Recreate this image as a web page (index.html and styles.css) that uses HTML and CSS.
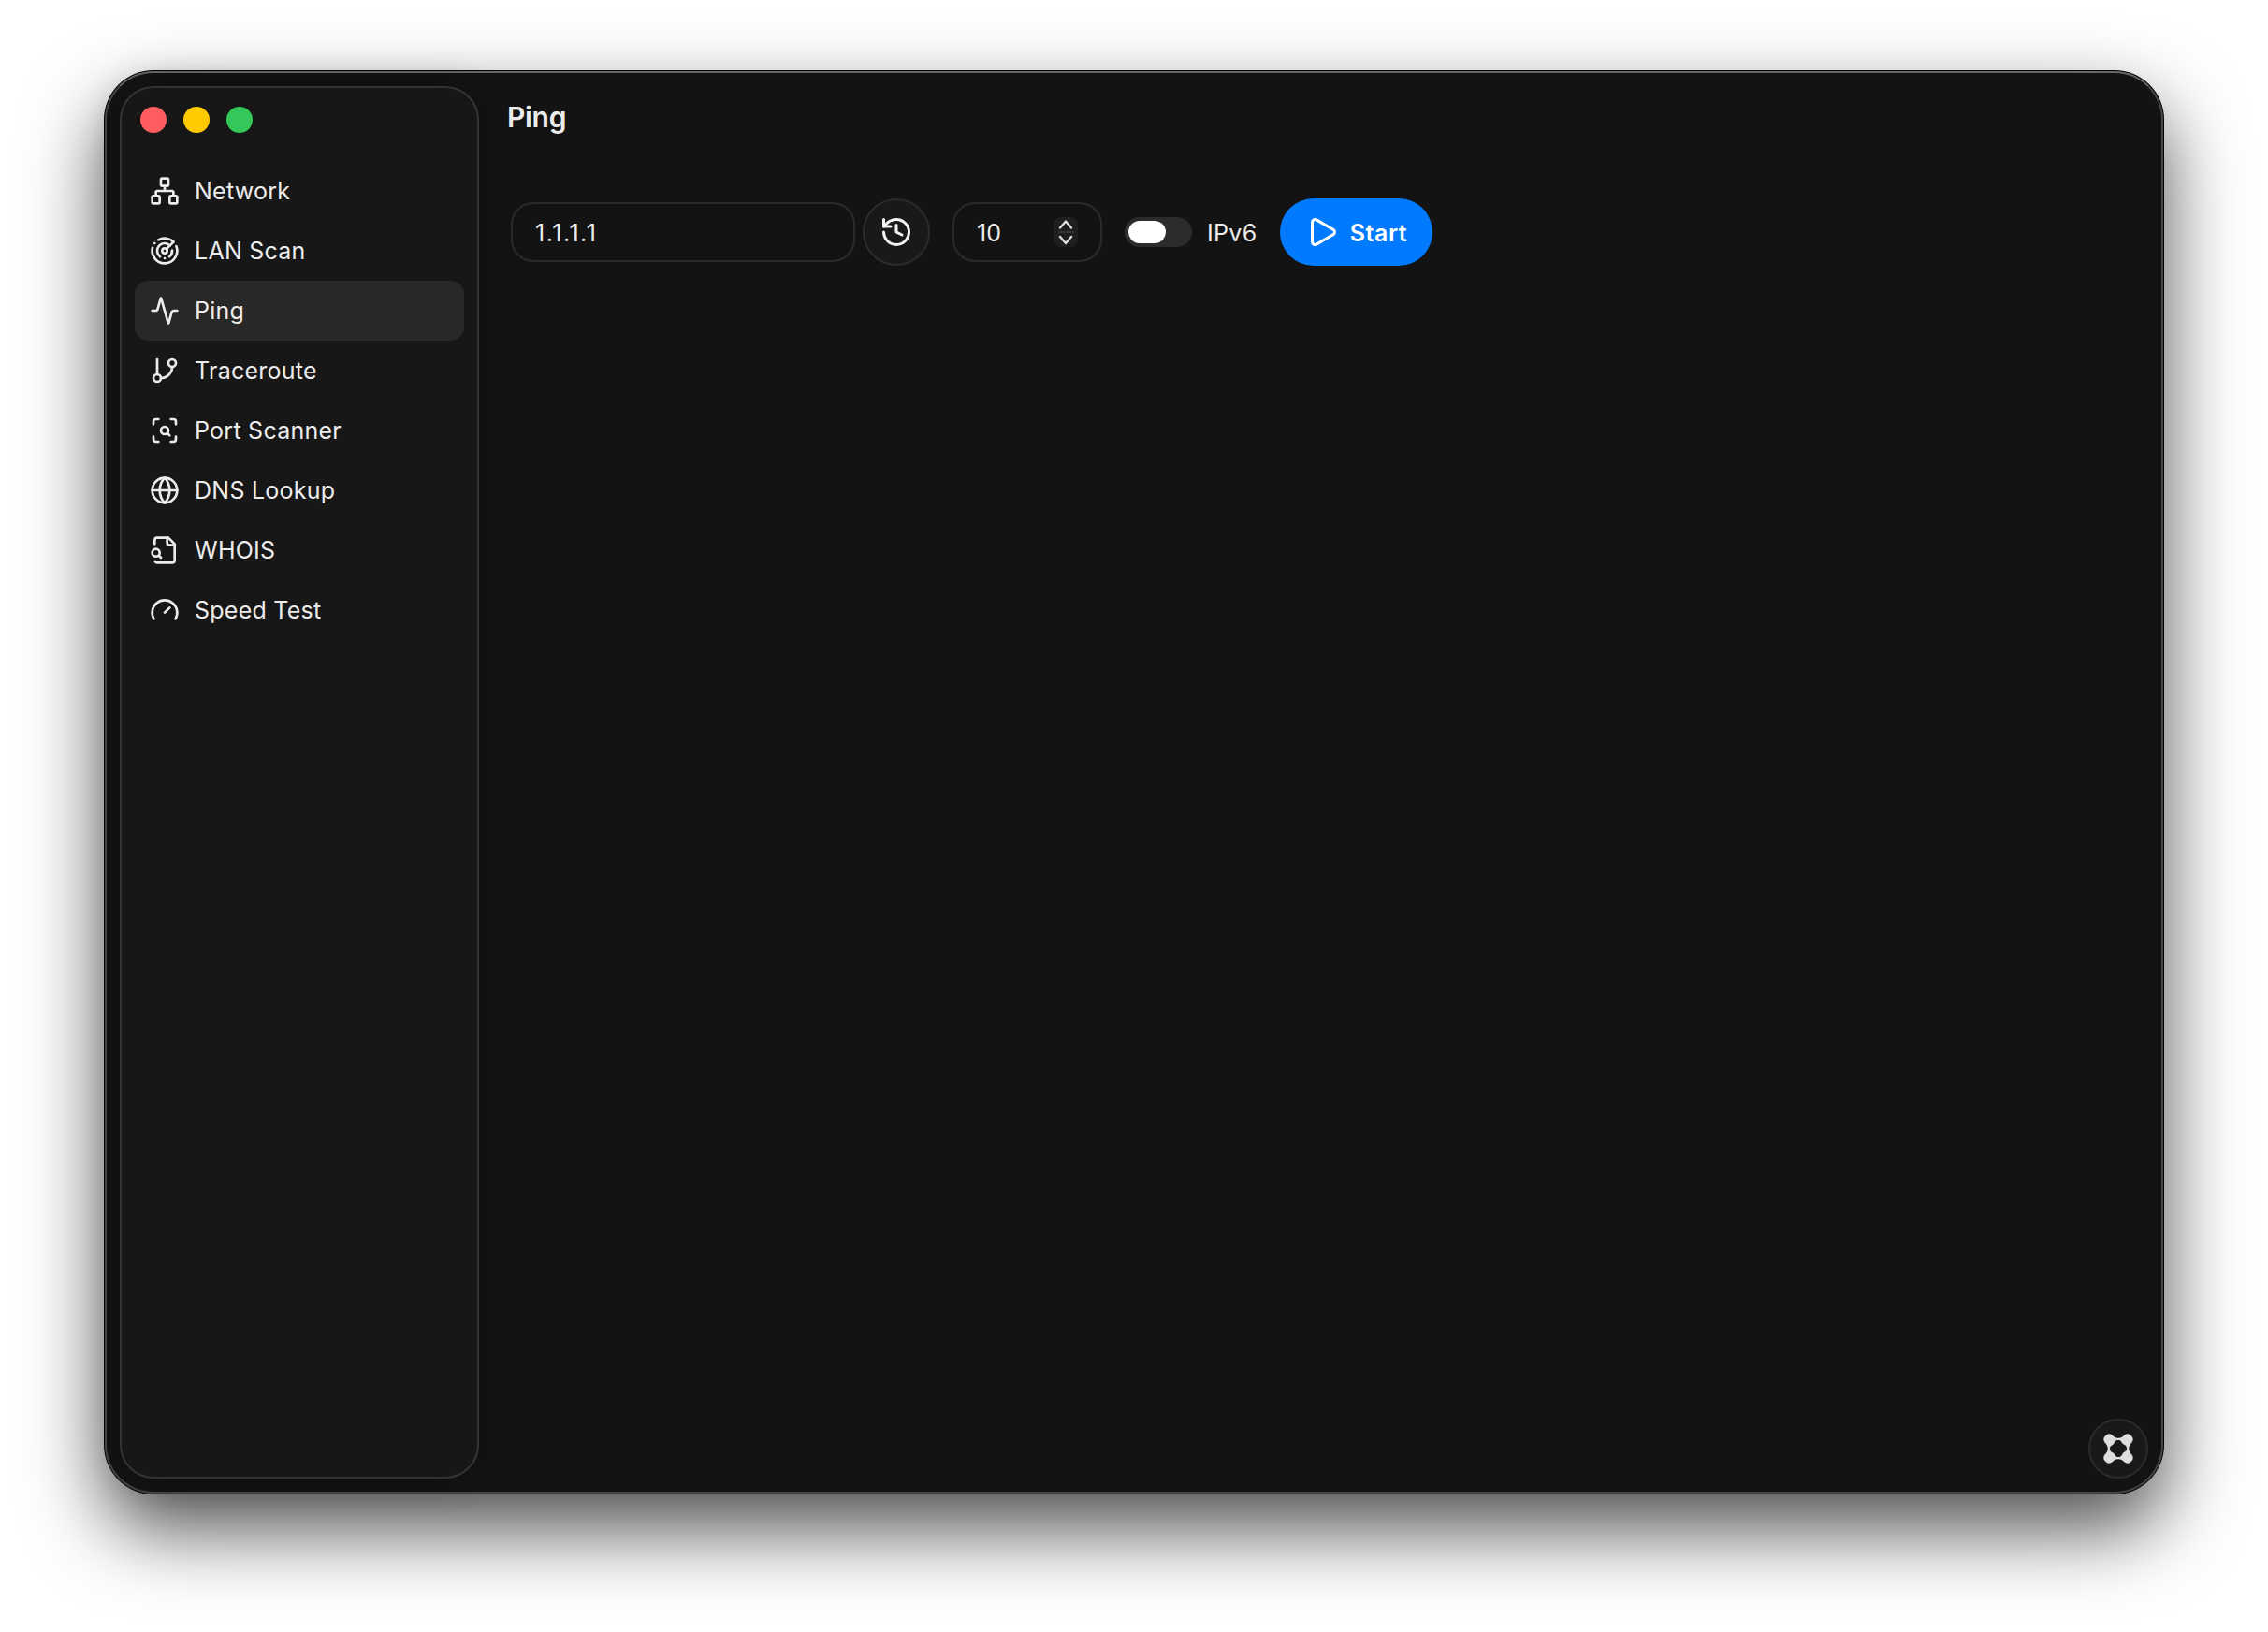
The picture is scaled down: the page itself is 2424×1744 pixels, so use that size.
FILE: index.html
```html
<!DOCTYPE html>
<html lang="en">
<head>
    <meta charset="UTF-8">
    <meta name="viewport" content="width=device-width, initial-scale=1.0">
    <title>Ping</title>
    <link rel="stylesheet" href="styles.css">
</head>
<body>

    <div class="window">
        <aside class="sidebar">
            <div class="traffic-lights">
                <span class="light red"></span>
                <span class="light yellow"></span>
                <span class="light green"></span>
            </div>

            <nav class="nav">
                <a class="nav-item">
                    <svg class="icon" viewBox="0 0 24 24"><rect x="16" y="16" width="6" height="6" rx="1"/><rect x="2" y="16" width="6" height="6" rx="1"/><rect x="9" y="2" width="6" height="6" rx="1"/><path d="M5 16v-3a1 1 0 0 1 1-1h12a1 1 0 0 1 1 1v3"/><path d="M12 12V8"/></svg>
                    <span>Network</span>
                </a>
                <a class="nav-item">
                    <svg class="icon" viewBox="0 0 24 24"><path d="M19.07 4.93A10 10 0 0 0 6.99 3.34"/><path d="M4 6h.01"/><path d="M2.29 9.62A10 10 0 1 0 21.31 8.35"/><path d="M16.24 7.76A6 6 0 1 0 8.23 16.67"/><path d="M12 18h.01"/><path d="M17.99 11.66A6 6 0 0 1 15.77 16.67"/><circle cx="12" cy="12" r="2"/><path d="m13.41 10.59 5.66-5.66"/></svg>
                    <span>LAN Scan</span>
                </a>
                <a class="nav-item active">
                    <svg class="icon" viewBox="0 0 24 24"><path d="M22 12h-2.48a2 2 0 0 0-1.93 1.46l-2.35 8.36a.25.25 0 0 1-.48 0L9.24 2.18a.25.25 0 0 0-.48 0l-2.35 8.36A2 2 0 0 1 4.49 12H2"/></svg>
                    <span>Ping</span>
                </a>
                <a class="nav-item">
                    <svg class="icon" viewBox="0 0 24 24"><path d="M6 3v12"/><circle cx="18" cy="6" r="3"/><circle cx="6" cy="18" r="3"/><path d="M18 9a9 9 0 0 1-9 9"/></svg>
                    <span>Traceroute</span>
                </a>
                <a class="nav-item">
                    <svg class="icon" viewBox="0 0 24 24"><path d="M3 7V5a2 2 0 0 1 2-2h2"/><path d="M17 3h2a2 2 0 0 1 2 2v2"/><path d="M21 17v2a2 2 0 0 1-2 2h-2"/><path d="M7 21H5a2 2 0 0 1-2-2v-2"/><circle cx="12" cy="12" r="3"/><path d="m16 16-1.9-1.9"/></svg>
                    <span>Port Scanner</span>
                </a>
                <a class="nav-item">
                    <svg class="icon" viewBox="0 0 24 24"><circle cx="12" cy="12" r="10"/><path d="M12 2a14.5 14.5 0 0 0 0 20 14.5 14.5 0 0 0 0-20"/><path d="M2 12h20"/></svg>
                    <span>DNS Lookup</span>
                </a>
                <a class="nav-item">
                    <svg class="icon" viewBox="0 0 24 24"><path d="M14 2v4a2 2 0 0 0 2 2h4"/><path d="M4.268 21a2 2 0 0 0 1.727 1H18a2 2 0 0 0 2-2V7l-5-5H6a2 2 0 0 0-2 2v3"/><path d="m9 18-1.5-1.5"/><circle cx="5" cy="14" r="3"/></svg>
                    <span>WHOIS</span>
                </a>
                <a class="nav-item">
                    <svg class="icon" viewBox="0 0 24 24"><path d="m12 14 4-4"/><path d="M3.34 19a10 10 0 1 1 17.32 0"/></svg>
                    <span>Speed Test</span>
                </a>
            </nav>
        </aside>

        <main class="main">
            <h1>Ping</h1>

            <div class="toolbar">
                <div class="field host">1.1.1.1</div>
                <button class="round-btn history">
                    <svg class="icon" viewBox="0 0 24 24"><path d="M3 12a9 9 0 1 0 9-9 9.75 9.75 0 0 0-6.74 2.74L3 8"/><path d="M3 3v5h5"/><path d="M12 7v5l4 2"/></svg>
                </button>
                <div class="field count">
                    <span>10</span>
                    <span class="stepper">
                        <svg viewBox="0 0 26 32"><path d="M7 11.5l6-7 6 7"/><path d="M7 21l6 7 6-7"/><path class="divider" d="M6 16h15"/></svg>
                    </span>
                </div>
                <div class="toggle"><span class="knob"></span></div>
                <span class="toggle-label">IPv6</span>
                <button class="start-btn">
                    <svg class="icon" viewBox="0 0 24 24"><path d="M5 5a2 2 0 0 1 3.008-1.728l11.997 6.998a2 2 0 0 1 .003 3.458l-12 7A2 2 0 0 1 5 19z"/></svg>
                    <span>Start</span>
                </button>
            </div>

            <button class="round-btn corner">
                <svg class="logo" viewBox="0 0 32 32"><path fill-rule="evenodd" d="M9.7 1.7C11.5 3.5 13 4.7 16 4.7S20.5 3.5 22.3 1.7A5.7 5.7 0 0 1 30.3 9.7C28.5 11.5 27.3 13 27.3 16S28.5 20.5 30.3 22.3A5.7 5.7 0 0 1 22.3 30.3C20.5 28.5 19 27.3 16 27.3S11.5 28.5 9.7 30.3A5.7 5.7 0 0 1 1.7 22.3C3.5 20.5 4.7 19 4.7 16S3.5 11.5 1.7 9.7A5.7 5.7 0 0 1 9.7 1.7ZM16 7C12.5 7 12.5 9 11 11S7 12.5 7 16 9 19.5 11 21 12.5 25 16 25 19.5 23 21 21 25 19.5 25 16 23 12.5 21 11 19.5 7 16 7Z"/></svg>
            </button>
        </main>
    </div>

</body>
</html>
```

FILE: styles.css
```css
* {
    box-sizing: border-box;
}

body {
    margin: 0;
    padding: 76px 112px 148px;
    height: 1744px;
    background-color: #fff;
    color: #ececec;
    font-family: Inter, "Liberation Sans", sans-serif;
    font-size: 25px;
    overflow: hidden;
}

.window {
    display: flex;
    height: 1520px;
    padding: 14px;
    border: 2px solid #464646;
    border-top-color: #666;
    border-radius: 52px;
    background-color: #131313;
    box-shadow: 0 0 0 1px #000, 0 37px 84px rgba(0, 0, 0, 0.7);
}

.sidebar {
    width: 384px;
    padding: 20px 14px;
    border: 2px solid #333;
    border-radius: 36px;
    background-color: #171717;
    box-shadow: 0 0 36px rgba(0, 0, 0, 0.25);
}

.traffic-lights {
    display: flex;
    gap: 18px;
    padding-left: 6px;
}

.light {
    width: 28px;
    height: 28px;
    border-radius: 50%;
}

.red {
    background-color: #ff5c60;
}

.yellow {
    background-color: #ffca00;
}

.green {
    background-color: #35c759;
}

.nav {
    margin-top: 30px;
}

.nav-item {
    display: flex;
    align-items: center;
    gap: 16px;
    height: 64px;
    padding: 0 16px;
    border-radius: 14px;
    letter-spacing: 0.25px;
}

.nav-item.active {
    background-color: #282828;
}

.icon {
    width: 32px;
    height: 32px;
    fill: none;
    stroke: currentColor;
    stroke-width: 2;
    stroke-linecap: round;
    stroke-linejoin: round;
}

.main {
    position: relative;
    flex: 1;
    padding-left: 30px;
}

h1 {
    margin: 15px 0 0;
    font-size: 30px;
    font-weight: 600;
    letter-spacing: -0.3px;
    line-height: 36px;
}

.toolbar {
    display: flex;
    align-items: center;
    margin: 69px 0 0 4px;
}

.field {
    display: flex;
    align-items: center;
    justify-content: space-between;
    height: 64px;
    padding: 0 24px;
    border: 2px solid #2b2b2b;
    border-radius: 24px;
}

.host {
    width: 368px;
    padding-top: 2px;
    letter-spacing: 1.5px;
}

.count {
    width: 160px;
}

.count > span:first-child {
    padding-top: 2px;
}

button {
    display: flex;
    align-items: center;
    justify-content: center;
    padding: 0;
    color: #f2f2f2;
    font-family: inherit;
}

.round-btn {
    border: 2px solid #2b2b2b;
    border-radius: 50%;
    background-color: #191919;
}

.history {
    width: 72px;
    height: 72px;
    margin: 0 24px 0 8px;
}

.history .icon {
    width: 36px;
    height: 36px;
}

.stepper {
    width: 26px;
    height: 32px;
    border-radius: 8px;
    background-color: #1e1e1e;
}

.stepper svg {
    display: block;
    fill: none;
    stroke: #ddd;
    stroke-width: 2.4;
    stroke-linecap: round;
    stroke-linejoin: round;
}

.stepper .divider {
    stroke: #333;
    stroke-width: 2;
}

.toggle {
    width: 72px;
    height: 32px;
    margin: 0 16px 0 24px;
    padding: 4px;
    border-radius: 16px;
    background-color: #2c2c2c;
}

.knob {
    display: block;
    width: 40px;
    height: 24px;
    border-radius: 12px;
    background-color: #fff;
}

.toggle-label {
    width: 54px;
    padding-top: 2px;
    letter-spacing: 0.3px;
}

.start-btn {
    gap: 12px;
    width: 163px;
    height: 72px;
    margin-left: 24px;
    border: none;
    border-radius: 36px;
    background-color: #007aff;
    color: #fff;
    font-size: 25px;
    font-weight: 600;
    letter-spacing: 0.5px;
}

.start-btn .icon {
    width: 36px;
    height: 36px;
}

.start-btn span {
    padding-top: 2px;
}

/* floats over the content area */
.corner {
    position: absolute;
    right: 0;
    bottom: 0;
    width: 64px;
    height: 64px;
}

.logo {
    width: 32px;
    height: 32px;
    fill: #dedede;
}
```
